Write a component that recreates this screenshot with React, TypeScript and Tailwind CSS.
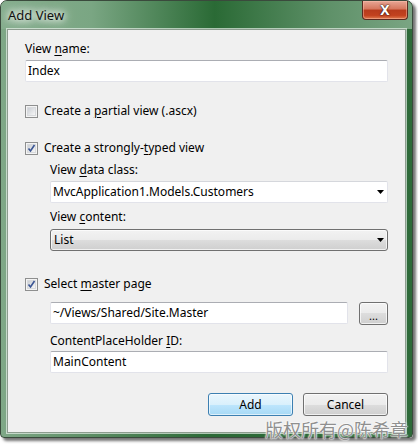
import React from "react";

const font = { fontFamily: '"Segoe UI", "Noto Sans", "Open Sans", sans-serif' };

function U({ c }: { c: string }) {
  return <span className="underline underline-offset-2">{c}</span>;
}

function Checkbox({ checked }: { checked: boolean }) {
  return (
    <div className="w-[13px] h-[13px] border border-[#8e8f8f] bg-[#f4f4f4] flex items-center justify-center shrink-0">
      <div className="w-[9px] h-[9px] bg-gradient-to-br from-[#cbcfd5] to-[#f6f6f6] border border-[#d8dadd] relative">
        {checked && (
          <svg className="absolute -left-[1px] -top-[1px]" width="9" height="9" viewBox="0 0 9 9">
            <path d="M1.5 4.5 L3.5 7 L7.5 1" fill="none" stroke="#3a5594" strokeWidth="1.6" />
          </svg>
        )}
      </div>
    </div>
  );
}

function Arrow() {
  return (
    <svg width="7" height="4" viewBox="0 0 7 4" className="shrink-0">
      <path d="M0 0 H7 L3.5 4 Z" fill="#000" />
    </svg>
  );
}

function TextBox({ value, className = "" }: { value: string; className?: string }) {
  return (
    <div
      className={
        "h-[22px] bg-white border border-[#e2e3ea] border-t-[#abadb3] rounded-[2px] flex items-center pl-[2px] text-[12px] text-black " +
        className
      }
    >
      {value}
    </div>
  );
}

export default function App() {
  return (
    <div className="w-[418px] h-[444px] bg-white relative overflow-hidden" style={font}>
      <div className="w-[413px] h-[438px] rounded-t-[7px] rounded-b-[4px] bg-gradient-to-r from-[#7fa887] via-[#2c6a37] to-[#2e6a39] shadow-[3px_3px_3px_rgba(0,0,0,0.55)] border border-[#3a4a3c] flex flex-col">
        <div className="h-[28px] shrink-0 flex items-start justify-between rounded-t-[6px] bg-[linear-gradient(90deg,#86ae8e_0%,#7aa683_22%,#2a6a35_52%,#5f9169_80%,#7aa583_100%)]">
          <div className="pl-[7px] pt-[5px] text-[13px] text-[#111] [text-shadow:0_0_6px_#fff,0_0_10px_#fff,0_0_14px_#fff]">Add View</div>
          <div className="mr-[4px] w-[46px] h-[19px] rounded-b-[4px] border border-t-0 border-[#5a2a20] bg-[linear-gradient(180deg,#e7a695_0%,#d5765d_45%,#b73b1c_50%,#c2421f_80%,#e07a4e_100%)] shadow-[inset_0_0_0_1px_rgba(255,200,180,0.45)] flex items-center justify-center text-white font-bold text-[14px] leading-none [text-shadow:0_0_2px_#3a1a10,0_0_1px_#000]">
            X
          </div>
        </div>
        <div className="mx-[6px] h-[404px] bg-[#f0f0f0] border border-[#8c9c8e] shadow-[0_0_0_1px_rgba(230,240,232,0.7)] px-[17px] pt-[11px] text-[12px] text-black flex flex-col">
          <div className="h-[16px] leading-[16px]">
            View <U c="n" />ame:
          </div>
          <TextBox value="Index" className="mt-[3px]" />

          <div className="mt-[21px] h-[16px] flex items-center gap-[6px]">
            <Checkbox checked={false} />
            <span>
              Create a <U c="p" />artial view (.ascx)
            </span>
          </div>

          <div className="mt-[21px] h-[16px] flex items-center gap-[6px]">
            <Checkbox checked={true} />
            <span>
              Create a strongly-<U c="t" />yped view
            </span>
          </div>

          <div className="ml-[25px] flex flex-col">
            <div className="mt-[6px] h-[16px] leading-[16px]">
              View <U c="d" />ata class:
            </div>
            <div className="mt-[3px] h-[22px] bg-white border border-[#e2e3ea] border-t-[#d5d7dc] rounded-[2px] flex items-center justify-between pl-[2px] pr-[3px]">
              <span>MvcApplication1.Models.Customers</span>
              <Arrow />
            </div>
            <div className="mt-[6px] h-[16px] leading-[16px]">
              View <U c="c" />ontent:
            </div>
            <div className="mt-[4px] h-[22px] rounded-[3px] border border-[#707070] bg-[linear-gradient(180deg,#f2f2f2_0%,#ebebeb_50%,#dddddd_50%,#cfcfcf_100%)] shadow-[inset_0_0_0_1px_rgba(255,255,255,0.7)] flex items-center justify-between pl-[3px] pr-[3px]">
              <span>List</span>
              <Arrow />
            </div>
          </div>

          <div className="mt-[25px] h-[16px] flex items-center gap-[6px]">
            <Checkbox checked={true} />
            <span>
              Select <U c="m" />aster page
            </span>
          </div>

          <div className="ml-[25px] flex flex-col">
            <div className="mt-[10px] h-[23px] flex items-start gap-[11px]">
              <TextBox value="~/Views/Shared/Site.Master" className="flex-1" />
              <div className="w-[29px] h-[23px] rounded-[3px] border border-[#707070] bg-[linear-gradient(180deg,#f2f2f2_0%,#ebebeb_50%,#dddddd_50%,#cfcfcf_100%)] shadow-[inset_0_0_0_1px_rgba(255,255,255,0.7)] flex items-end justify-center pb-[3px] text-[11px] leading-none">
                ...
              </div>
            </div>
            <div className="mt-[8px] h-[16px] leading-[16px]">
              ContentPlaceHolder <U c="I" />D:
            </div>
            <TextBox value="MainContent" className="mt-[2px]" />
          </div>

          <div className="mt-[20px] flex justify-end gap-[10px]">
            <div className="w-[85px] h-[23px] rounded-[3px] border border-[#3c7fb1] bg-[linear-gradient(180deg,#eaf6fd_0%,#d9f0fc_50%,#bee6fd_50%,#a7d9f5_100%)] shadow-[inset_0_0_0_1px_rgba(255,255,255,0.6)] flex items-center justify-center">
              Add
            </div>
            <div className="w-[85px] h-[23px] rounded-[3px] border border-[#707070] bg-[linear-gradient(180deg,#f2f2f2_0%,#ebebeb_50%,#dddddd_50%,#cfcfcf_100%)] shadow-[inset_0_0_0_1px_rgba(255,255,255,0.7)] flex items-center justify-center">
              Cancel
            </div>
          </div>
        </div>
      </div>
      <div
        className="absolute left-[265px] top-[417px] text-[18px] leading-[24px] text-[#8f8f8f] [text-shadow:0_0_2px_#fff,0_0_2px_#fff,0_0_1px_#fff]"
        style={{ fontFamily: '"Noto Sans CJK SC", "Noto Sans", sans-serif' }}
      >
        版权所有@陈希章
      </div>
    </div>
  );
}
